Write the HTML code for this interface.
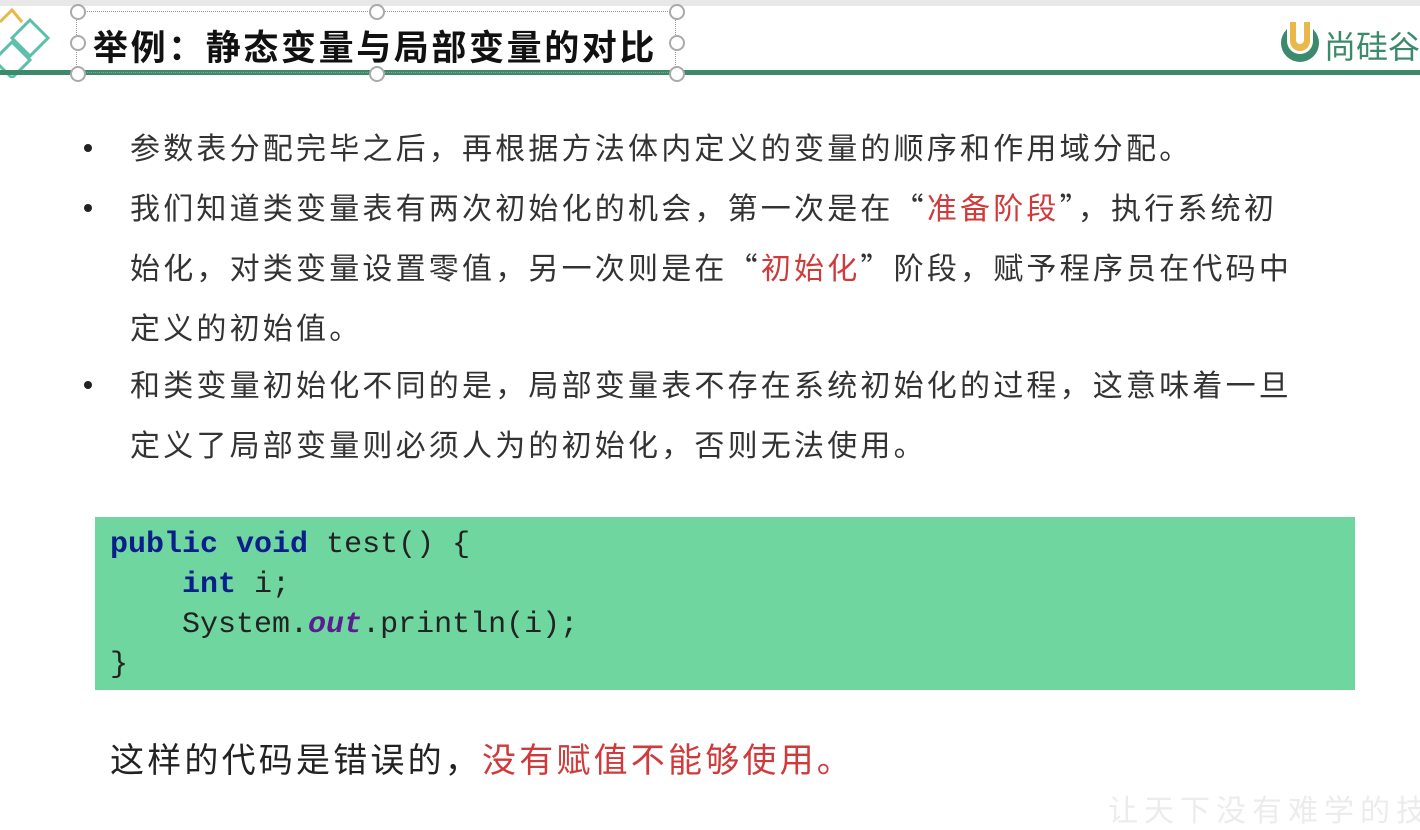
<!DOCTYPE html>
<html><head><meta charset="utf-8"><style>
*{margin:0;padding:0;box-sizing:border-box}
body{width:1420px;height:804px;background:#fff;position:relative;overflow:hidden;font-family:"Liberation Sans","Noto Sans CJK SC",sans-serif}
.top{position:absolute;left:0;top:0;width:1420px;height:6px;background:#e8e8e8}
.line{position:absolute;left:0;top:70px;width:1420px;height:5px;background:#3b8a6c}
.title{position:absolute;left:93px;top:20px;font-size:35px;font-weight:bold;color:#111;letter-spacing:2.6px;white-space:nowrap;font-family:"Noto Sans CJK SC",sans-serif}
.box{position:absolute;left:76px;top:11px;width:600px;height:62px;border:1px dotted #999}
.h{position:absolute;width:16px;height:16px;border:2px solid #aaa;border-radius:50%;background:#fff}
.p{position:absolute;left:130px;font-size:30px;color:#333;letter-spacing:3.2px;white-space:nowrap}
.q{font-family:"Noto Sans CJK SC",sans-serif}
.b{position:absolute;left:84px;width:8px;height:8px;border-radius:50%;background:#222}
.r{color:#d03a3a}
.code{position:absolute;left:95px;top:517px;width:1260px;height:173px;background:#70d6a0;font-family:"Liberation Mono",monospace;font-size:30px;line-height:40px;padding:8px 0 0 15px;color:#222}
.code div{white-space:pre}
.k{color:#0a1f8a;font-weight:bold}
.o{color:#5a1d8f;font-weight:bold;font-style:italic}
</style></head><body>
<div class="top"></div>
<svg style="position:absolute;left:0;top:8px" width="60" height="70">
<path d="M0 14 L12 2 L22 14" fill="none" stroke="#e8b84a" stroke-width="3"/>
<path d="M30 12 L48 30 L30 48 L12 30 Z" fill="none" stroke="#5cbfa8" stroke-width="3"/>
<path d="M12 34 L30 52 L12 70 L-6 52 Z" fill="none" stroke="#5cbfa8" stroke-width="3"/>
</svg>
<div class="line"></div>
<div class="box"></div>
<div class="h" style="left:70px;top:4px"></div><div class="h" style="left:369px;top:4px"></div><div class="h" style="left:669px;top:4px"></div>
<div class="h" style="left:70px;top:35px"></div><div class="h" style="left:669px;top:35px"></div>
<div class="h" style="left:70px;top:66px"></div><div class="h" style="left:369px;top:66px"></div><div class="h" style="left:669px;top:66px"></div>
<div class="title">举例：静态变量与局部变量的对比</div>
<div style="position:absolute;left:1281px;top:24px;width:38px;height:38px;border-radius:50%;background:#3b8a6c"></div>
<div style="position:absolute;left:1287px;top:24px;width:26px;height:30px;border-radius:0 0 13px 13px;background:#fff"></div>
<div style="position:absolute;left:1290px;top:22px;width:20px;height:29px;border-radius:0 0 10px 10px;background:#e8b84a"></div>
<div style="position:absolute;left:1296px;top:22px;width:8px;height:22px;border-radius:0 0 4px 4px;background:#fff"></div>
<div style="position:absolute;left:1324px;top:22px;font-size:32px;color:#3b8a6c;white-space:nowrap">尚硅谷</div>
<div class="b" style="top:144px"></div>
<div class="p" style="top:124px">参数表分配完毕之后，再根据方法体内定义的变量的顺序和作用域分配。</div>
<div class="b" style="top:204px"></div>
<div class="p" style="top:184px">我们知道类变量表有两次初始化的机会，第一次是在<span class="q">“</span><span class="r">准备阶段</span><span class="q">”</span>，执行系统初</div>
<div class="p" style="top:244px">始化，对类变量设置零值，另一次则是在<span class="q">“</span><span class="r">初始化</span><span class="q">”</span>阶段，赋予程序员在代码中</div>
<div class="p" style="top:304px">定义的初始值。</div>
<div class="b" style="top:381px"></div>
<div class="p" style="top:361px">和类变量初始化不同的是，局部变量表不存在系统初始化的过程，这意味着一旦</div>
<div class="p" style="top:421px">定义了局部变量则必须人为的初始化，否则无法使用。</div>
<div class="code">
<div><span class="k">public</span> <span class="k">void</span> test() {</div>
<div>    <span class="k">int</span> i;</div>
<div>    System.<span class="o">out</span>.println(i);</div>
<div>}</div>
</div>
<div style="position:absolute;left:110px;top:733px;font-size:34px;color:#222;letter-spacing:3.2px;white-space:nowrap">这样的代码是错误的，<span class="r">没有赋值不能够使用。</span></div>
<div style="position:absolute;left:1108px;top:786px;font-size:30px;color:#ececec;letter-spacing:6px;white-space:nowrap">让天下没有难学的技术</div>
</body></html>
